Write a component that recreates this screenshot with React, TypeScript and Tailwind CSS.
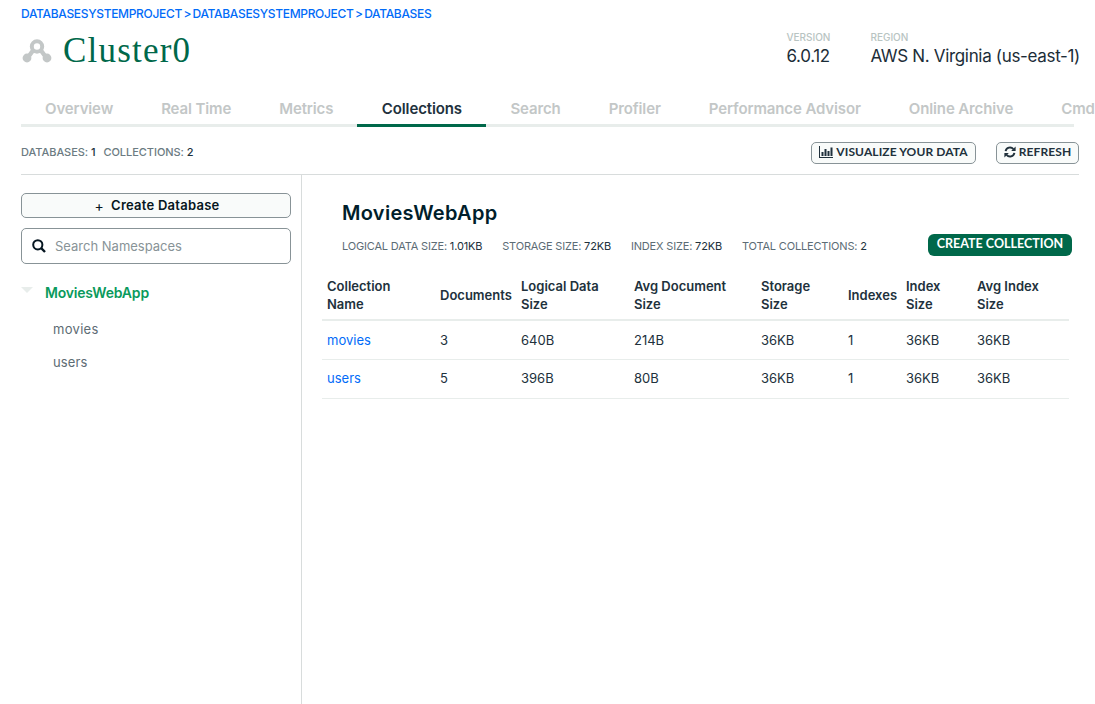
import React from "react";

const tabs = ["Overview", "Real Time", "Metrics", "Collections", "Search", "Profiler", "Performance Advisor", "Online Archive", "Cmd"];

const headers: [string, string?][] = [
  ["Collection", "Name"],
  ["Documents"],
  ["Logical Data", "Size"],
  ["Avg Document", "Size"],
  ["Storage", "Size"],
  ["Indexes"],
  ["Index", "Size"],
  ["Avg Index", "Size"],
];

const rows = [
  ["movies", "3", "640B", "214B", "36KB", "1", "36KB", "36KB"],
  ["users", "5", "396B", "80B", "36KB", "1", "36KB", "36KB"],
];

const widths = ["w-[113px]", "w-[81px]", "w-[113px]", "w-[127px]", "w-[87px]", "w-[58px]", "w-[71px]", "w-[97px]"];

function ClusterIcon() {
  return (
    <svg width="30" height="24" viewBox="0 0 30 24" fill="none" className="shrink-0">
      <circle cx="15" cy="7.5" r="5.2" stroke="#c3c7c7" strokeWidth="4" />
      <path d="M11 11.5 L5.5 19 M19 11.5 L24.5 19" stroke="#c3c7c7" strokeWidth="4.4" />
      <circle cx="5" cy="19" r="4.4" fill="#c3c7c7" />
      <circle cx="25" cy="19" r="4.4" fill="#c3c7c7" />
    </svg>
  );
}

function ChartIcon() {
  return (
    <svg width="14" height="12" viewBox="0 0 14 12" fill="#21313c" className="shrink-0">
      <rect x="0" y="0" width="1" height="12" />
      <rect x="0" y="11" width="14" height="1" />
      <rect x="2.5" y="6" width="2" height="4" />
      <rect x="5.5" y="3" width="2" height="7" />
      <rect x="8.5" y="5" width="2" height="5" />
      <rect x="11.5" y="1.5" width="2" height="8.5" />
    </svg>
  );
}

function RefreshIcon() {
  return (
    <svg width="12" height="12" viewBox="0 0 12 12" fill="none" className="shrink-0">
      <path d="M1.6 5.2 A4.4 4.4 0 0 1 9.4 3.2" stroke="#21313c" strokeWidth="1.9" />
      <path d="M10.4 6.8 A4.4 4.4 0 0 1 2.6 8.8" stroke="#21313c" strokeWidth="1.9" />
      <path d="M11.6 0.6 V5 H7.2 Z" fill="#21313c" />
      <path d="M0.4 11.4 V7 H4.8 Z" fill="#21313c" />
    </svg>
  );
}

function SearchIcon() {
  return (
    <svg width="14" height="14" viewBox="0 0 14 14" fill="none" className="shrink-0">
      <circle cx="5.8" cy="5.8" r="4.6" stroke="#061621" strokeWidth="2" />
      <path d="M9.2 9.2 L13 13" stroke="#061621" strokeWidth="2.4" />
    </svg>
  );
}

export default function App() {
  return (
    <div className="w-[1095px] h-[704px] overflow-hidden bg-white text-[#21313c] font-['Inter','Liberation_Sans',sans-serif]">
      <div className="pl-[21px] pt-[7px] h-[21px] leading-[14px] text-[12px] font-medium text-[#016bf8] tracking-[-0.32px] [word-spacing:-1.4px] whitespace-nowrap">
        DATABASESYSTEMPROJECT &gt; DATABASESYSTEMPROJECT &gt; DATABASES
      </div>

      <div className="flex justify-between pl-[22px] pr-[15px] h-[76px]">
        <div className="flex items-center gap-[11px] h-[60px]">
          <ClusterIcon />
          <span className="font-['Liberation_Serif',serif] text-[35px] leading-[40px] tracking-[1.2px] text-[#00684a]">Cluster0</span>
        </div>
        <div className="flex gap-[40px] pt-[9px]">
          <div>
            <div className="text-[10px] leading-[14px] font-medium text-[#b8c4c2]">VERSION</div>
            <div className="mt-[2px] text-[17px] leading-[20px] text-[#1c2d38] tracking-[-0.33px]">6.0.12</div>
          </div>
          <div>
            <div className="text-[10px] leading-[14px] font-medium text-[#b8c4c2]">REGION</div>
            <div className="mt-[2px] text-[17px] leading-[20px] text-[#1c2d38] tracking-[-0.33px] whitespace-nowrap">AWS N. Virginia (us-east-1)</div>
          </div>
        </div>
      </div>

      <div className="mx-[21px] flex h-[30px] border-b-[3px] border-[#e8edeb] whitespace-nowrap">
        {tabs.map((t) => (
          <div
            key={t}
            className={
              t === "Collections"
                ? "h-[30px] shrink-0 pt-[2px] px-[24.5px] text-[15px] leading-[20px] font-semibold tracking-[-0.12px] text-[#21313c] border-b-[3px] border-[#00684a]"
                : "h-[30px] shrink-0 pt-[2px] px-[24px] text-[15px] leading-[20px] font-semibold tracking-[-0.12px] text-[#c3c7c7]"
            }
          >
            {t}
          </div>
        ))}
      </div>

      <div className="mx-[21px] w-[1058px] h-[48px] pt-[4px] flex items-center justify-between border-b border-[#d8dcdc]">
        <div className="flex gap-[8px] text-[11px] font-medium tracking-[-0.05px] text-[#6b7b82]">
          <span>DATABASES: <span className="text-[#21313c]">1</span></span>
          <span>COLLECTIONS: <span className="text-[#21313c]">2</span></span>
        </div>
        <div className="flex gap-[20px]">
          <button className="flex items-center gap-[3px] h-[22px] w-[165px] pb-[1px] justify-center rounded-[5px] border border-[#889397] bg-[#f9fbfa] text-[12px] tracking-[0.1px] font-bold font-['Lato',sans-serif] text-[#21313c]">
            <ChartIcon />
            VISUALIZE YOUR DATA
          </button>
          <button className="flex items-center gap-[3px] h-[22px] w-[83px] pb-[1px] justify-center rounded-[5px] border border-[#889397] bg-[#f9fbfa] text-[12px] tracking-[0.1px] font-bold font-['Lato',sans-serif] text-[#21313c]">
            <RefreshIcon />
            REFRESH
          </button>
        </div>
      </div>

      <div className="flex h-[529px]">
        <aside className="w-[302px] shrink-0 border-r border-[#d8dcdc] pl-[21px] pr-[10px] pt-[18px]">
          <button className="w-[270px] h-[25px] pl-[2px] flex items-center justify-center gap-[7px] rounded-[5px] border border-[#889397] bg-[#f9fbfa] text-[13px] font-semibold tracking-[0.25px] text-[#061621]">
            <span className="font-normal text-[14px] leading-[14px]">+</span>
            Create Database
          </button>
          <div className="mt-[10px] w-[270px] h-[36px] flex items-center gap-[9px] pl-[10px] rounded-[5px] border border-[#889397]">
            <SearchIcon />
            <span className="pt-[1px] text-[13px] text-[#889397]">Search Namespaces</span>
          </div>
          <div className="mt-[19px] flex items-center h-[18px] gap-[12px]">
            <span className="w-0 h-0 border-x-[6px] border-x-transparent border-t-[6px] border-t-[#e8edeb] -translate-y-[2px]" />
            <span className="text-[14px] font-semibold tracking-[-0.2px] text-[#0a9a5c]">MoviesWebApp</span>
          </div>
          <div className="mt-[19px] pl-[32px] text-[13px] tracking-[0.3px] text-[#5d6c74] leading-[18px] h-[33px]">movies</div>
          <div className="pl-[32px] text-[13px] tracking-[0.1px] text-[#5d6c74] leading-[18px]">users</div>
        </aside>

        <main className="flex-1 pl-[20px] min-w-0">
          <div className="pl-[20px] pt-[25px] text-[20px] leading-[26px] font-semibold tracking-[0.3px] text-[#001e2b]">MoviesWebApp</div>
          <div className="mt-[8px] flex items-center h-[24px] pl-[20px] w-[750px]">
            <div className="flex-1 flex gap-[20px] text-[11px] tracking-[-0.17px] text-[#5c6c75] whitespace-nowrap">
              <span>LOGICAL DATA SIZE: <span className="text-[#21313c]">1.01KB</span></span>
              <span>STORAGE SIZE: <span className="text-[#21313c]">72KB</span></span>
              <span>INDEX SIZE: <span className="text-[#21313c]">72KB</span></span>
              <span>TOTAL COLLECTIONS: <span className="text-[#21313c]">2</span></span>
            </div>
            <button className="h-[22px] w-[144px] mb-[2px] pb-[1px] rounded-[6px] bg-[#00684a] text-white text-[12.5px] font-bold font-['Lato',sans-serif]">
              CREATE COLLECTION
            </button>
          </div>
          <table className="mt-[15px] w-[747px] table-fixed border-collapse">
            <thead>
              <tr className="h-[47px] border-b-2 border-[#e8edeb]">
                {headers.map((h, i) => (
                  <th key={i} className={`${widths[i]} px-[5px] pb-[2px] text-left align-middle text-[13px] leading-[18px] font-semibold tracking-[0px] text-[#21313c]`}>
                    <div>{h[0]}</div>
                    {h[1] && <div>{h[1]}</div>}
                  </th>
                ))}
              </tr>
            </thead>
            <tbody>
              {rows.map((r) => (
                <tr key={r[0]} className="h-[39px] border-b border-[#e8edeb]">
                  {r.map((c, i) => (
                    <td key={i} className={i === 0 ? "px-[5px] pt-[1px] text-[13px] text-[#016bf8]" : "px-[5px] pt-[1px] text-[13px] text-[#21313c]"}>
                      {c}
                    </td>
                  ))}
                </tr>
              ))}
            </tbody>
          </table>
        </main>
      </div>
    </div>
  );
}
